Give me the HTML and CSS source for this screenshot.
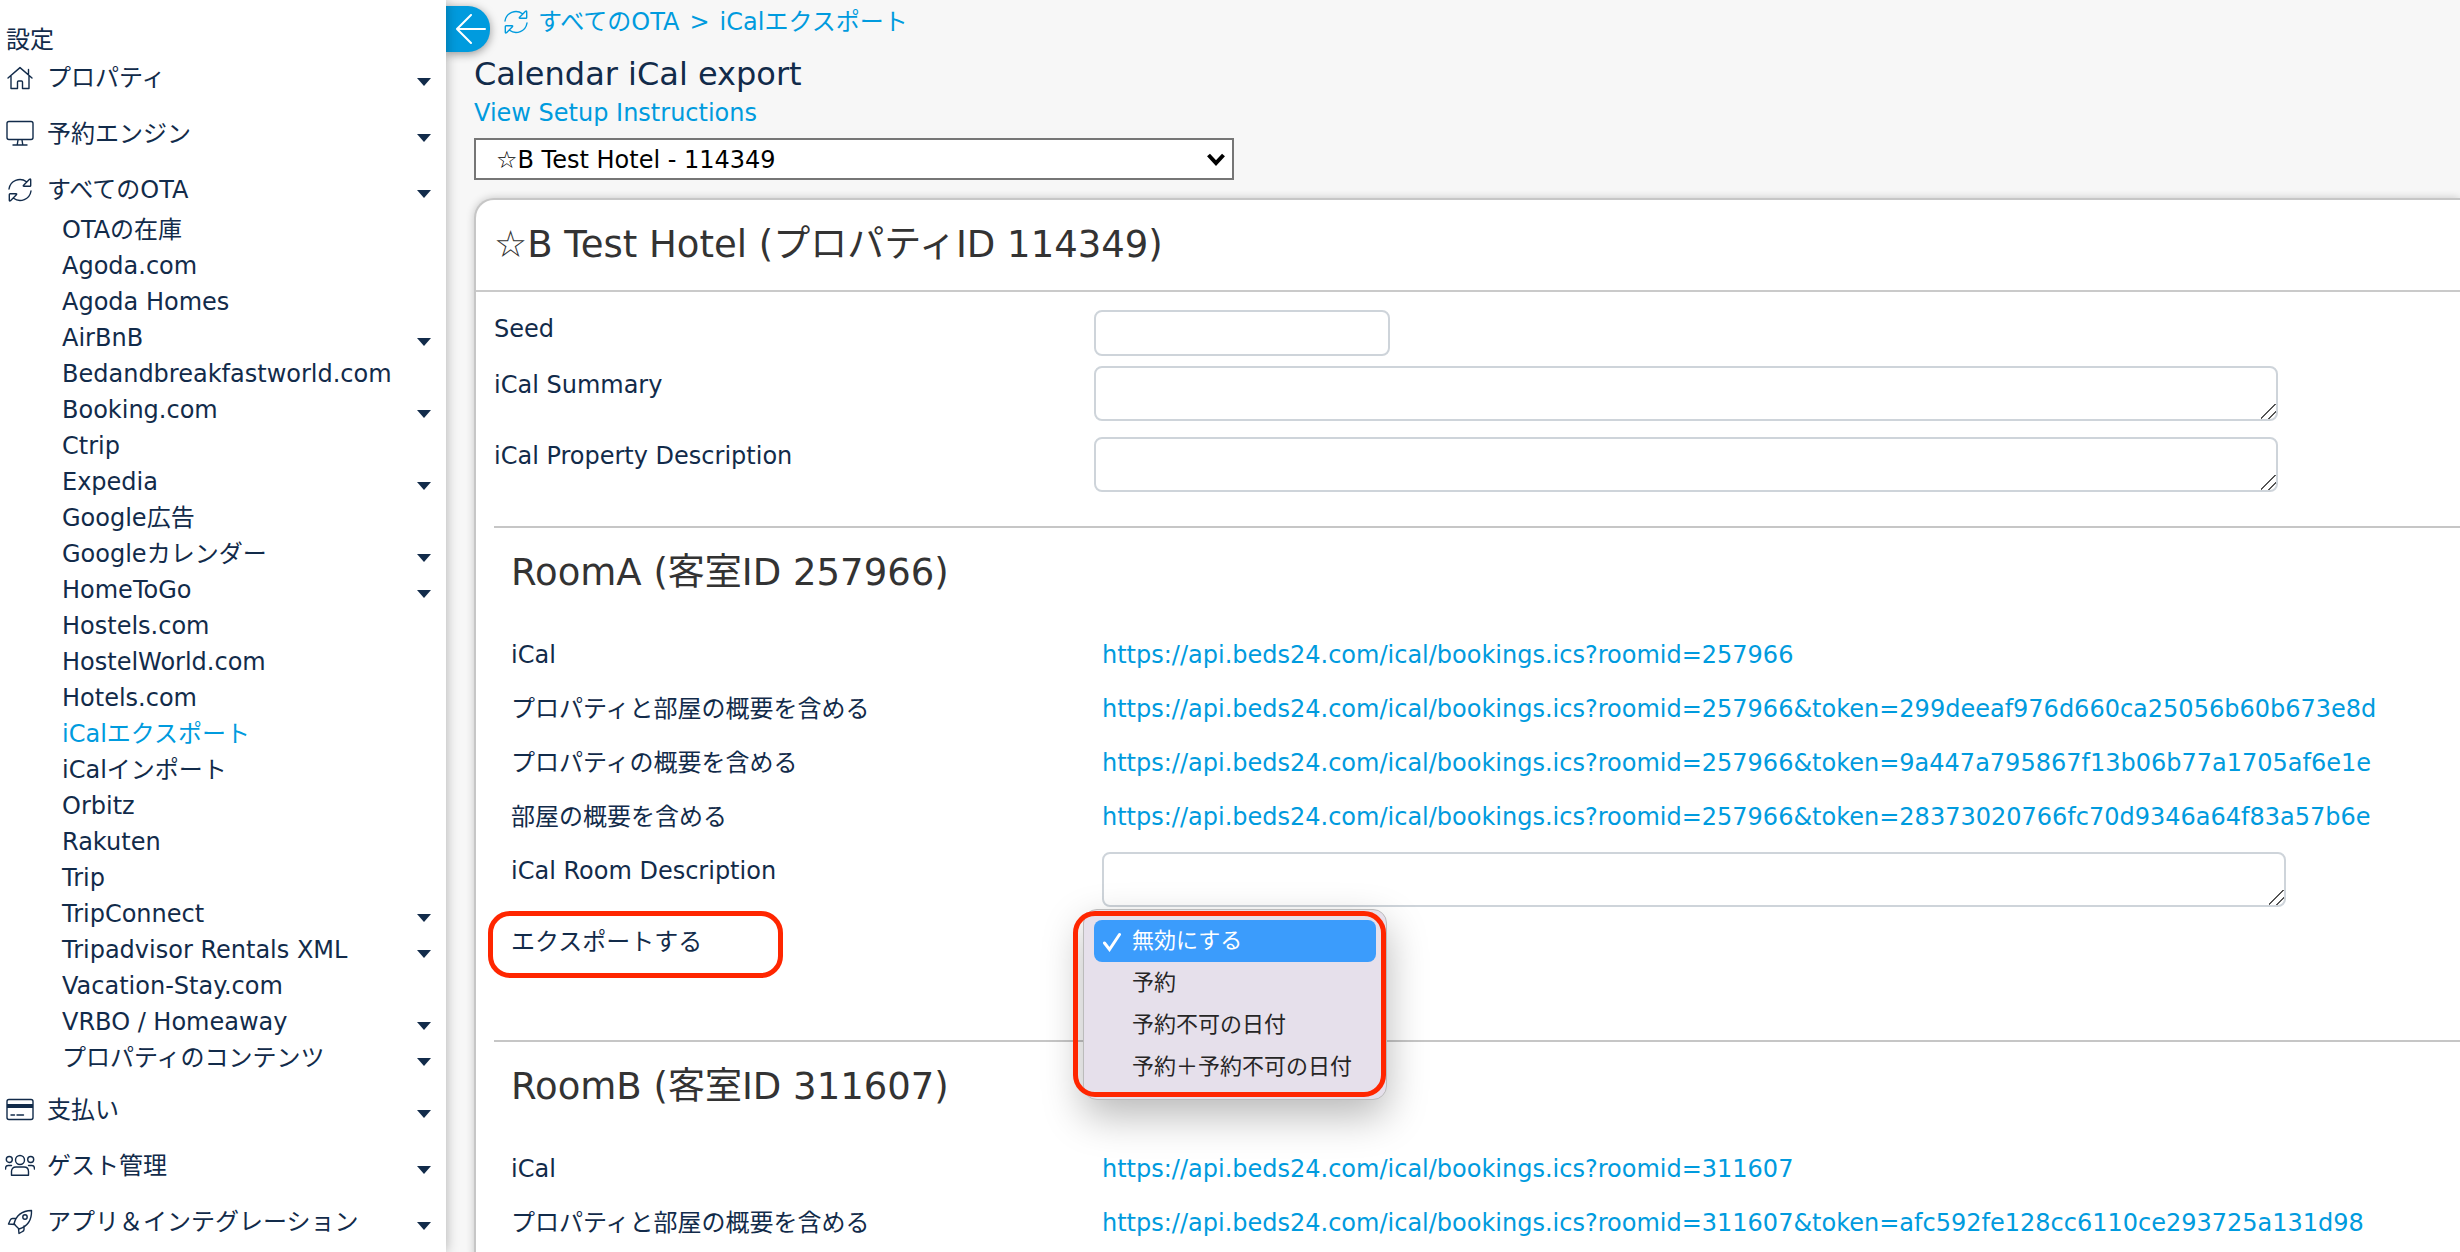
FILE: index.html
```html
<!DOCTYPE html>
<html lang="ja">
<head>
  <meta charset="utf-8">
  <title>Calendar iCal export</title>
  <link rel="stylesheet" href="styles.css">
</head>
<body>

<!-- shared icons -->
<svg class="sprite" aria-hidden="true">
  <symbol id="sync" viewBox="0 0 24 24">
    <path d="M1 11A11 11 0 0 1 18.500 3.800M22.700 2V7.500q0 .8-.8.800H16q-1.200 0-.4-1L21.500 1.300q1.200-.7 1.200.7M23 13A11 11 0 0 1 5.500 20.200M1.300 22V16.500q0-.8.8-.8H8q1.200 0 .4 1L2.500 22.700q-1.200.7-1.200-.7"/>
  </symbol>
</svg>

<div class="app">
  <nav class="sidebar">
    <h2 class="menu-title">設定</h2>
    <ul class="menu">
      <li class="menu-item">
        <a href="#" class="menu-link caret">
          <svg class="icon" viewBox="0 0 30 30"><path d="M3 15L15 4.600L27 15M6 13v12.500h6.500V19q0-1 1-1h3q1 0 1 1v6.500H24V13M23.500 6.500V11"/></svg>
          プロパティ
        </a>
      </li>
      <li class="menu-item">
        <a href="#" class="menu-link caret">
          <svg class="icon" viewBox="0 0 30 30"><rect x="2" y="2.500" width="26" height="18" rx="2"/><path d="M13 21l-.8 5M17 21l.8 5M8 26h14"/></svg>
          予約エンジン
        </a>
      </li>
      <li class="menu-item open">
        <a href="#" class="menu-link caret">
          <svg class="icon icon-sync"><use href="#sync"/></svg>
          すべてのOTA
        </a>
        <ul class="submenu">
          <li><a href="#">OTAの在庫</a></li>
          <li><a href="#">Agoda.com</a></li>
          <li><a href="#">Agoda Homes</a></li>
          <li><a href="#" class="caret">AirBnB</a></li>
          <li><a href="#">Bedandbreakfastworld.com</a></li>
          <li><a href="#" class="caret">Booking.com</a></li>
          <li><a href="#">Ctrip</a></li>
          <li><a href="#" class="caret">Expedia</a></li>
          <li><a href="#">Google広告</a></li>
          <li><a href="#" class="caret">Googleカレンダー</a></li>
          <li><a href="#" class="caret">HomeToGo</a></li>
          <li><a href="#">Hostels.com</a></li>
          <li><a href="#">HostelWorld.com</a></li>
          <li><a href="#">Hotels.com</a></li>
          <li><a href="#" class="active">iCalエクスポート</a></li>
          <li><a href="#">iCalインポート</a></li>
          <li><a href="#">Orbitz</a></li>
          <li><a href="#">Rakuten</a></li>
          <li><a href="#">Trip</a></li>
          <li><a href="#" class="caret">TripConnect</a></li>
          <li><a href="#" class="caret">Tripadvisor Rentals XML</a></li>
          <li><a href="#">Vacation-Stay.com</a></li>
          <li><a href="#" class="caret">VRBO / Homeaway</a></li>
          <li><a href="#" class="caret">プロパティのコンテンツ</a></li>
        </ul>
      </li>
      <li class="menu-item">
        <a href="#" class="menu-link caret">
          <svg class="icon" viewBox="0 0 30 30"><rect x="2" y="4.500" width="26" height="20" rx="2"/><path class="solid" d="M2 9h26v4H2z"/><path d="M6 20h3.500M12 20h6.500"/></svg>
          支払い
        </a>
      </li>
      <li class="menu-item">
        <a href="#" class="menu-link caret">
          <svg class="icon" viewBox="0 0 30 30"><circle cx="15" cy="9" r="4.500"/><circle cx="4.300" cy="8.500" r="3"/><circle cx="25.700" cy="8.500" r="3"/><path d="M6.500 24.200v-3.700q0-4.500 4.500-4.500h8q4.500 0 4.500 4.500v3.700zM.6 18v-1q0-2.500 2.600-2.500h3.300M29.400 18v-1q0-2.500-2.600-2.500h-3.300"/></svg>
          ゲスト管理
        </a>
      </li>
      <li class="menu-item">
        <a href="#" class="menu-link caret">
          <svg class="icon" viewBox="0 0 30 30"><path d="M9 17Q12 4 26.500 3.500Q27 18 14 22zM11 11.500H7.500Q6 11.500 5.300 13L3.500 17l6.500.5M19 19v3.500q0 1.500-1.500 2L14 26.500l-.5-5"/><circle cx="20" cy="10" r="2.200"/></svg>
          アプリ＆インテグレーション
        </a>
      </li>
    </ul>
  </nav>

  <main class="main">
    <div class="topbar">
      <button class="toggle" type="button" aria-label="Close menu">
        <svg viewBox="0 0 30 30"><path d="M29 15H1M15 1L1 15l14 14"/></svg>
      </button>
      <div class="breadcrumb">
        <svg class="icon-crumb"><use href="#sync"/></svg>
        <a href="#">すべてのOTA</a>
        <span>&gt;</span>
        <a href="#">iCalエクスポート</a>
      </div>
    </div>

    <div class="page-head">
      <h1>Calendar iCal export</h1>
      <a class="help" href="#">View Setup Instructions</a>
      <div class="select-wrap">
        <select class="property-select" aria-label="Property">
          <option>☆B Test Hotel - 114349</option>
        </select>
        <svg class="chevron" viewBox="0 0 20 14"><path d="M2.500 3L10 11l7.500-8"/></svg>
      </div>
    </div>

    <section class="card">
      <h2 class="card-title">☆B Test Hotel (プロパティID 114349)</h2>

      <div class="card-body">
        <div class="row">
          <label for="seed">Seed</label>
          <input id="seed" class="field seed" type="text">
        </div>
        <div class="row">
          <label for="summary">iCal Summary</label>
          <textarea id="summary" class="field"></textarea>
        </div>
        <div class="row">
          <label for="propDesc">iCal Property Description</label>
          <textarea id="propDesc" class="field"></textarea>
        </div>

        <div class="room">
          <h3>RoomA (客室ID 257966)</h3>
          <div class="row">
            <span>iCal</span>
            <a href="#">https://api.beds24.com/ical/bookings.ics?roomid=257966</a>
          </div>
          <div class="row">
            <span>プロパティと部屋の概要を含める</span>
            <a href="#">https://api.beds24.com/ical/bookings.ics?roomid=257966&amp;token=299deeaf976d660ca25056b60b673e8d</a>
          </div>
          <div class="row">
            <span>プロパティの概要を含める</span>
            <a href="#">https://api.beds24.com/ical/bookings.ics?roomid=257966&amp;token=9a447a795867f13b06b77a1705af6e1e</a>
          </div>
          <div class="row">
            <span>部屋の概要を含める</span>
            <a href="#">https://api.beds24.com/ical/bookings.ics?roomid=257966&amp;token=28373020766fc70d9346a64f83a57b6e</a>
          </div>
          <div class="row">
            <label for="roomDesc">iCal Room Description</label>
            <textarea id="roomDesc" class="field"></textarea>
          </div>
          <div class="row export-row">
            <label for="export" class="marked">エクスポートする</label>
            <div class="dropdown">
              <div class="popup">
                <select id="export" size="4">
                  <option selected>無効にする</option>
                  <option>予約</option>
                  <option>予約不可の日付</option>
                  <option>予約＋予約不可の日付</option>
                </select>
                <svg class="check" viewBox="0 0 20 20"><path d="M2.500 11l5 6.500L17.500 2.500"/></svg>
              </div>
            </div>
          </div>
        </div>

        <div class="room">
          <h3>RoomB (客室ID 311607)</h3>
          <div class="row">
            <span>iCal</span>
            <a href="#">https://api.beds24.com/ical/bookings.ics?roomid=311607</a>
          </div>
          <div class="row">
            <span>プロパティと部屋の概要を含める</span>
            <a href="#">https://api.beds24.com/ical/bookings.ics?roomid=311607&amp;token=afc592fe128cc6110ce293725a131d98</a>
          </div>
        </div>
      </div>
    </section>
  </main>
</div>

</body>
</html>
```
FILE: styles.css
```css
*, *::before, *::after {
  box-sizing: border-box;
}

body {
  margin: 0;
  font-family: "DejaVu Sans", "Noto Sans CJK JP", sans-serif;
  font-size: 24px;
  color: #122b4a;
  background: #f7f7f7;
}

h1, h2, h3, ul {
  margin: 0;
  padding: 0;
  font-weight: normal;
}

ul {
  list-style: none;
}

a {
  color: #009bde;
  text-decoration: none;
}

.sprite {
  display: none;
}

.app {
  display: flex;
  height: 100vh;
  overflow: hidden;
}

/* sidebar */
.sidebar {
  flex: 0 0 446px;
  padding-top: 20px;
  background: white;
  box-shadow: 0 0 12px rgba(0, 0, 0, 0.3);
  z-index: 1;
}

.menu-title {
  padding-left: 6px;
  font-size: 24px;
  line-height: 40px;
}

.menu-item {
  margin-bottom: 20px;
}

.menu-link {
  display: flex;
  align-items: center;
  gap: 12px;
  padding-left: 5px;
}

.menu a {
  color: #122b4a;
  line-height: 36px;
}

.menu a.active {
  color: #009bde;
}

.submenu {
  margin-top: 4px;
}

.menu-item.open {
  margin-bottom: 16px;
}

.submenu a {
  display: flex;
  padding-left: 62px;
}

.caret::after {
  content: "";
  align-self: center;
  margin: 8px 15px 0 auto;
  border: 7px solid transparent;
  border-top: 8px solid #122b4a;
  border-bottom: 0;
}

.icon, .icon-sync, .icon-crumb {
  width: 30px;
  height: 30px;
  fill: none;
  stroke: #122b4a;
  stroke-width: 1.4;
  stroke-linejoin: round;
  stroke-linecap: round;
}

.icon-sync {
  padding: 3px;
}

.icon .solid {
  fill: #122b4a;
  stroke: none;
}

/* main area */
.main {
  flex: 1;
  min-width: 0;
  display: flex;
  flex-direction: column;
}

.topbar {
  display: flex;
  align-items: flex-start;
  gap: 14px;
}

.toggle {
  display: flex;
  align-items: center;
  width: 44px;
  height: 46px;
  margin-top: 6px;
  padding: 0 0 0 10px;
  border: none;
  border-radius: 0 22px 22px 0;
  background: #009bde;
  box-shadow: 0 2px 10px rgba(0, 0, 0, 0.4);
  cursor: pointer;
}

.toggle svg {
  width: 30px;
  height: 30px;
  fill: none;
  stroke: white;
  stroke-width: 2;
  stroke-linecap: round;
}

.breadcrumb {
  display: flex;
  align-items: center;
  gap: 10px;
  padding-top: 4px;
  line-height: 36px;
  color: #009bde;
}

.icon-crumb {
  width: 24px;
  height: 24px;
  stroke: #009bde;
}

.page-head {
  padding: 2px 28px 18px;
}

.page-head h1 {
  font-size: 32px;
  line-height: 40px;
}

.help {
  display: block;
  line-height: 38px;
  margin-bottom: 6px;
}

.select-wrap {
  position: relative;
  width: 760px;
}

.property-select {
  display: block;
  width: 100%;
  height: 42px;
  padding: 2px 20px 0;
  appearance: none;
  border: 2px solid #767676;
  border-radius: 0;
  background: white;
  font: inherit;
  color: black;
}

.chevron {
  position: absolute;
  top: 14px;
  right: 8px;
  width: 20px;
  height: 14px;
  fill: none;
  stroke: black;
  stroke-width: 4;
}

/* property card */
.card {
  flex: 1 0 auto;
  margin-left: 28px;
  border: 2px solid #c6c6c6;
  border-width: 2px 0 0 2px;
  border-radius: 20px 0 0 0;
  background: white;
  box-shadow: 0 0 8px rgba(0, 0, 0, 0.2);
}

.card-title {
  padding-left: 18px;
  border-bottom: 2px solid #cacaca;
  font-size: 37px;
  line-height: 90px;
  color: #333;
}

.card-body {
  padding: 18px 0 0 18px;
}

.row {
  display: grid;
  grid-template-columns: 600px 1fr;
  margin-bottom: 16px;
  line-height: 38px;
}

.row:first-child {
  margin-bottom: 10px;
}

.field {
  width: 1184px;
  height: 55px;
  border: 2px solid #ced4da;
  border-radius: 8px;
  background: white;
  font: inherit;
}

.field::-webkit-resizer {
  background: linear-gradient(135deg, transparent 46%, #555 46%, #555 53%, transparent 53%, transparent 72%, #555 72%, #555 79%, transparent 79%);
}

.seed {
  width: 296px;
  height: 46px;
}

.room {
  margin-top: 34px;
  padding: 18px 0 0 17px;
  border-top: 2px solid #c6c6c6;
}

.room h3 {
  margin-bottom: 36px;
  font-size: 37px;
  line-height: 54px;
  color: #333;
}

.room .row {
  grid-template-columns: 591px 1fr;
}

.room .export-row {
  margin-bottom: 79px;
}

.room + .room {
  margin-top: 0;
}

/* export drop-down with highlight frames */
.marked, .dropdown {
  position: relative;
}

.marked::before, .popup::after {
  content: "";
  position: absolute;
  border: 5px solid #ff2600;
  border-radius: 22px;
  pointer-events: none;
}

.marked::before {
  top: -12px;
  left: -23px;
  width: 295px;
  height: 67px;
}

.popup {
  position: absolute;
  top: -14px;
  left: -19px;
  width: 304px;
  padding: 10px 10px 11px;
  border: 1px solid #bbb;
  border-radius: 14px;
  background: #e6e0eb;
  box-shadow: 0 16px 40px rgba(0, 0, 0, 0.28);
}

.popup::after {
  top: 1px;
  left: -11px;
  width: 313px;
  height: 186px;
}

.popup select {
  display: block;
  width: 100%;
  height: 168px;
  padding: 0;
  border: none;
  outline: none;
  background: none;
  overflow: hidden;
  font-family: inherit;
  font-size: 22px;
}

.popup option {
  height: 42px;
  padding: 2px 0 0 38px;
  border-radius: 8px;
  line-height: 42px;
  color: #262626;
}

.popup option:checked {
  background: linear-gradient(#3b9cfc, #3b9cfc);
  -webkit-text-fill-color: white;
}

.check {
  position: absolute;
  top: 22px;
  left: 18px;
  width: 20px;
  height: 20px;
  fill: none;
  stroke: white;
  stroke-width: 3;
  stroke-linecap: round;
}
```
